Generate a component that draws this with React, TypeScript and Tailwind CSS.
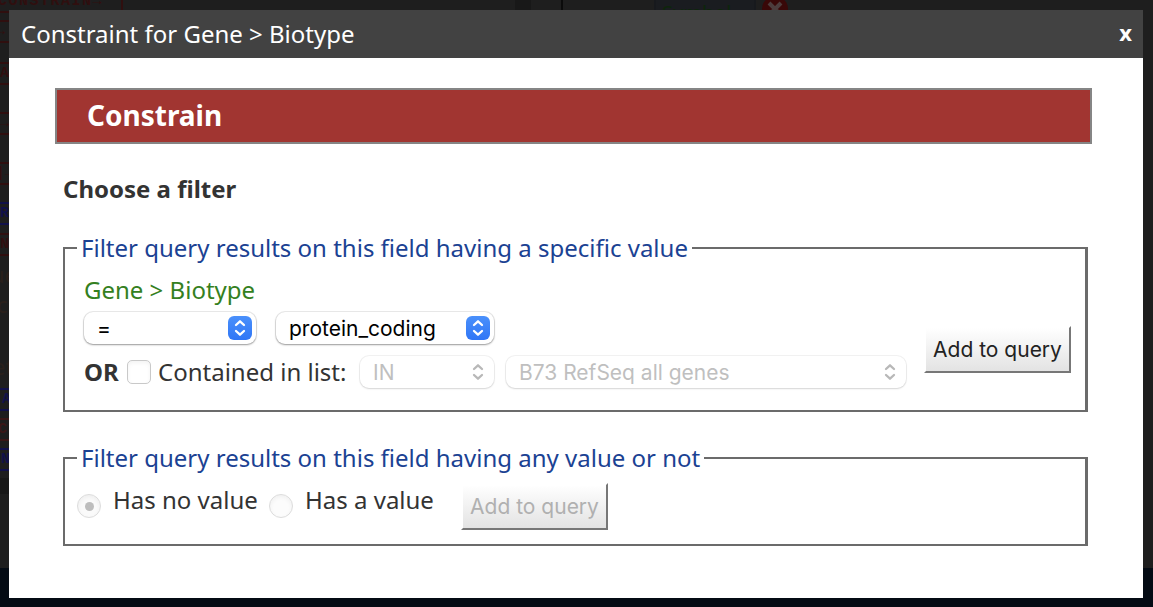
import type { ReactNode } from "react";

const chip = "flex h-[23px] w-[60px] shrink-0 items-center border-2 font-['Liberation_Mono'] text-[15px] font-bold leading-none";

function Backdrop() {
  return (
    <div className="absolute inset-0 flex flex-col overflow-hidden bg-[#1e1e1e]" aria-hidden="true">
      <div className="relative h-[568px] shrink-0">
        <div className="absolute left-[-12px] top-[-11px] flex h-6 w-[135px] items-center border-2 border-[#300f0f] pl-2 font-['Liberation_Mono'] text-[15px] font-bold leading-none tracking-[1.5px] text-[#300f0f]">
          CONSTRAIN→
        </div>
        <div className="absolute left-[515px] top-0 h-[10px] w-4 bg-[#181818]" />
        <div className="absolute left-[561px] top-0 h-[10px] w-[2px] bg-[#0b0b0b]" />
        <div className="absolute left-[654px] top-0 h-[10px] w-[102px] overflow-hidden border-x-2 border-[#17191d] bg-[#1a1c20]">
          <span className="relative top-[1px] block pl-[6px] font-['Noto_Sans'] text-[20px] leading-[24px] text-[#0d260b]">Symbol</span>
        </div>
        <svg className="absolute left-[762px] top-[-4px]" width="26" height="26" viewBox="0 0 26 26">
          <circle cx="13" cy="13" r="13" fill="#390808" />
          <path d="M7 7l12 12M19 7L7 19" stroke="#4c3d3d" strokeWidth="4" />
        </svg>
        <div className="absolute left-0 top-[20px] w-[9px] overflow-hidden">
          <div className={`${chip} ml-[-10px] border-[#300f0f] pl-1 text-[#300f0f]`}>→</div>
          <div className={`${chip} ml-[-10px] mt-[19px] border-[#300f0f] pl-2 text-[#300f0f]`}>A</div>
          <div className={`${chip} ml-[-10px] mt-[27px] border-[#300f0f] pl-2 text-[#300f0f]`}>→</div>
          <div className={`${chip} ml-[-10px] mt-[27px] border-[#300f0f] pl-1 text-[#300f0f]`}>|→</div>
          <div className={`${chip} ml-[-10px] mt-[17px] border-[#11114a] pl-2 text-[#11114a]`}>R</div>
          <div className={`${chip} ml-[-10px] mt-[8px] border-[#300f0f] pl-2 text-[#300f0f]`}>N</div>
          <div className="ml-[-9px] mt-[4px] h-7 font-['Noto_Sans'] text-[22px] leading-7 text-[#2a201b]">ue</div>
          <div className="ml-[-3px] mt-[2px] h-7 font-['Noto_Sans'] text-[22px] leading-7 text-[#2a201b]">c</div>
          <div className="ml-[-7px] mt-[34px] h-7 font-['Noto_Sans'] text-[22px] leading-7 text-[#2a201b]">et</div>
          <div className={`${chip} ml-[-10px] mt-[8px] border-[#11114a] pl-[10px] text-[#11114a]`}>A</div>
          <div className={`${chip} ml-[-10px] mt-[7px] border-[#3a1717] pl-[6px] text-[#3a1717]`}>C</div>
          <div className={`${chip} ml-[-10px] mt-[7px] border-[#11114a] pl-0 text-[#11114a]`}>UN</div>
          <div className="mt-[7px] h-4 bg-[#181818]" />
        </div>
      </div>
      <div className="grow bg-[#040b14]" />
    </div>
  );
}

function Chevrons({ className }: { className: string }) {
  return (
    <svg width="24" height="24" viewBox="0 0 24 24" fill="none" className={className}>
      <path d="M8 9l4-3.7L16 9M8 15l4 3.7L16 15" stroke="currentColor" strokeWidth="2.3" strokeLinecap="round" strokeLinejoin="round" />
    </svg>
  );
}

function Select({ children, className, disabled = false }: { children: ReactNode; className: string; disabled?: boolean }) {
  return (
    <button
      type="button"
      disabled={disabled}
      className={`flex items-center justify-between rounded-[9px] bg-white pl-[13px] pr-1 text-left font-['Inter'] text-[21px] leading-none ${
        disabled
          ? "text-[#bfbfbf] shadow-[0_0_0_1px_rgba(0,0,0,0.05),0_1px_2px_rgba(0,0,0,0.12)]"
          : "text-black shadow-[0_0_0_1px_rgba(0,0,0,0.08),0_1px_2px_rgba(0,0,0,0.35)]"
      } ${className}`}
    >
      <span className="whitespace-nowrap">{children}</span>
      <Chevrons className={disabled ? "text-[#b8b8b8]" : "rounded-[6px] bg-gradient-to-b from-[#4a90fb] to-[#3076f6] text-white"} />
    </button>
  );
}

function AddButton({ disabled = false, className }: { disabled?: boolean; className: string }) {
  return (
    <button
      type="button"
      disabled={disabled}
      className={`h-[47px] w-[147px] whitespace-nowrap border-2 border-b-[#777] border-l-white border-r-[#777] border-t-white bg-gradient-to-b from-white to-[#e3e3e3] font-['Inter'] text-[21px] leading-none ${
        disabled ? "text-[#b0b0b0]" : "text-[#222]"
      } ${className}`}
    >
      Add to query
    </button>
  );
}

const fieldset = "ml-2 w-[1025px] border-2 border-r-[3px] border-[#6b6b6b] pl-3";
const legend = "h-[30px] whitespace-nowrap px-1 leading-[30px] text-[#1b4293]";

export default function App() {
  return (
    <div className="relative h-[607px] w-[1153px] overflow-hidden px-[9px] pt-[10px] font-['Noto_Sans',sans-serif] text-[24px] text-[#333]">
      <Backdrop />
      <div className="relative flex h-[588px] w-[1134px] flex-col bg-white">
        <header className="flex h-12 shrink-0 items-center justify-between bg-[#424242] pl-3 pr-[11px] text-white">
          <h2 className="whitespace-nowrap leading-[46px]">Constraint for Gene &gt; Biotype</h2>
          <button type="button" className="pb-1 text-[22px] font-bold leading-none">x</button>
        </header>
        <main className="flex flex-col pl-[46px] pt-[30px]">
          <h1 className="h-14 w-[1037px] border-2 border-[#858585] bg-[#a13531] pl-[30px] text-[28px] font-bold leading-[50px] text-white">
            <span>Constrain</span>
          </h1>
          <h3 className="ml-2 mt-[30px] h-[30px] font-bold leading-[30px]">
            <span>Choose a filter</span>
          </h3>
          <fieldset className={`${fieldset} mt-[29px] h-[179px]`}>
            <legend className={legend}>Filter query results on this field having a specific value</legend>
            <div className="flex pl-[7px]">
              <div className="w-[840px]">
                <div className="mt-3 h-[30px] leading-[30px] text-[#347f21]"><span>Gene &gt; Biotype</span></div>
                <div className="mt-[7px] flex gap-5">
                  <Select className="h-8 w-[172px]">=</Select>
                  <Select className="h-8 w-[218px]">protein_coding</Select>
                </div>
                <div className="mt-3 flex items-center">
                  <strong className="w-[43px] leading-8">OR</strong>
                  <span className="size-6 rounded-[5px] border border-[#c9c9c9] bg-white shadow-inner" />
                  <label className="w-[209px] whitespace-nowrap pl-[7px] leading-8">Contained in list:</label>
                  <Select disabled className="h-8 w-[134px]">IN</Select>
                  <Select disabled className="ml-3 h-8 w-[400px]">B73 RefSeq all genes</Select>
                </div>
              </div>
              <AddButton className="mt-[63px]" />
            </div>
          </fieldset>
          <fieldset className={`${fieldset} mt-[31px] h-[103px]`}>
            <legend className={legend}>Filter query results on this field having any value or not</legend>
            <div className="flex">
              <span className="mt-[21px] flex size-6 items-center justify-center rounded-full border border-[#dcdcdc] bg-[#fafafa] shadow-inner">
                <span className="size-[9px] rounded-full bg-[#bdbdbd]" />
              </span>
              <label className="mt-3 w-[168px] whitespace-nowrap pl-3 leading-[30px]">Has no value</label>
              <span className="mt-[21px] size-6 rounded-full border border-[#dcdcdc] bg-[#fcfcfc] shadow-inner" />
              <label className="mt-3 w-[168px] whitespace-nowrap pl-3 leading-[30px]">Has a value</label>
              <AddButton disabled className="mt-[10px]" />
            </div>
          </fieldset>
        </main>
      </div>
    </div>
  );
}
